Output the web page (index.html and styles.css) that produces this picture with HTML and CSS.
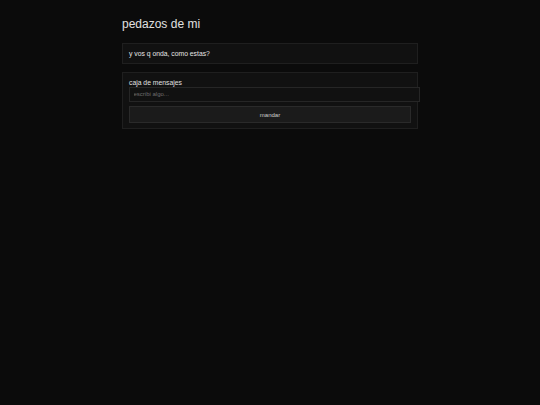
FILE: index.html
```html
<!DOCTYPE html>
<html lang="es">
<head>
<meta charset="utf-8">
<title>pedazos de mi</title>
<link rel="stylesheet" href="styles.css">
</head>
<body>
<main class="page">
  <h1 class="title">pedazos de mi</h1>
  <section class="card message">y vos q onda, como estas?</section>
  <form class="card compose">
    <label class="label" for="msg">caja de mensajes</label>
    <input class="input" id="msg" type="text" placeholder="escribi algo...">
    <button class="send" type="button">mandar</button>
  </form>
</main>
</body>
</html>
```
FILE: styles.css
```css
html, body {
  margin: 0;
  padding: 0;
  background: #0b0b0b;
  height: 100%;
}
body {
  font-family: "Liberation Sans", Arial, sans-serif;
  color: #dcdcdc;
}
.page {
  width: 296px;
  margin: 0 auto;
  padding-top: 17px;
  display: flex;
  flex-direction: column;
}
.title {
  margin: 0 0 12px 0;
  font-size: 12px;
  font-weight: normal;
  line-height: 14px;
  color: #e0e0e0;
}
.card {
  background: #111111;
  border: 1px solid #1f1f1f;
  box-sizing: border-box;
}
.message {
  padding: 5px 6px;
  font-size: 6.8px;
  line-height: 9px;
  color: #e6e6e6;
}
.compose {
  margin: 8px 0 0 0;
  padding: 6px 6px 5px 6px;
  display: flex;
  flex-direction: column;
}
.label {
  font-size: 6.8px;
  line-height: 8px;
  color: #e0e0e0;
}
.input {
  width: 100%;
  height: 7px;
  margin: 0;
  padding: 3px 3.5px;
  font-family: "Liberation Sans", Arial, sans-serif;
  font-size: 6px;
  line-height: 7px;
  color: #cccccc;
  background: #111111;
  border: 1px solid #262626;
  outline: none;
  box-sizing: content-box;
}
.input::placeholder {
  color: #6f6f6f;
}
.send {
  margin-top: 4px;
  width: 100%;
  height: 17px;
  padding: 0;
  font-family: "Liberation Sans", Arial, sans-serif;
  font-size: 6px;
  color: #cfcfcf;
  background: #1b1b1b;
  border: 1px solid #2a2a2a;
  box-sizing: border-box;
}
```
